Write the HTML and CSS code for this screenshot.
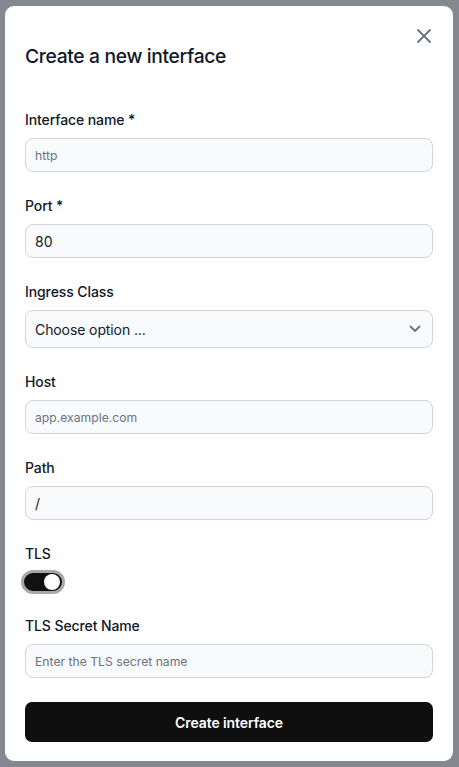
FILE: index.html
```html
<!DOCTYPE html>
<html>
<head>
<meta charset="utf-8">
<link rel="stylesheet" href="styles.css">
</head>
<body>
<div class="overlay">
  <div class="modal">
    <button class="close" aria-label="Close">
      <svg width="14" height="14" viewBox="0 0 14 14"><path d="M1 1L13 13M13 1L1 13" stroke="#6b7280" stroke-width="1.8" stroke-linecap="round"/></svg>
    </button>
    <h2 class="title">Create a new interface</h2>
    <form class="form">
      <div class="field">
        <label class="label">Interface name *</label>
        <input class="input" placeholder="http">
      </div>
      <div class="field">
        <label class="label">Port *</label>
        <input class="input value" value="80">
      </div>
      <div class="field">
        <label class="label">Ingress Class</label>
        <div class="select">
          <span>Choose option ...</span>
          <svg width="12" height="8" viewBox="0 0 12 8"><path d="M1.5 1.5L6 6L10.5 1.5" fill="none" stroke="#6b7280" stroke-width="1.8" stroke-linecap="round" stroke-linejoin="round"/></svg>
        </div>
      </div>
      <div class="field">
        <label class="label">Host</label>
        <input class="input" placeholder="app.example.com">
      </div>
      <div class="field">
        <label class="label">Path</label>
        <input class="input value" value="/">
      </div>
      <div class="field field-toggle">
        <label class="label">TLS</label>
        <div class="toggle-wrap"><span class="toggle"><span class="knob"></span></span></div>
      </div>
      <div class="field">
        <label class="label">TLS Secret Name</label>
        <input class="input" placeholder="Enter the TLS secret name">
      </div>
      <button type="button" class="submit">Create interface</button>
    </form>
  </div>
</div>
</body>
</html>
```
FILE: styles.css
```css
* { box-sizing: border-box; }
html, body { margin: 0; padding: 0; }
body {
  background: #868890;
  font-family: Inter, "Noto Sans", sans-serif;
  color: #111827;
  width: 459px;
  height: 767px;
  overflow: hidden;
}
.overlay {
  padding: 6px 6px 0 5px;
}
.modal {
  position: relative;
  background: #fff;
  border-radius: 9px;
  width: 448px;
  height: 755px;
  padding: 36px 20px 20px 20px;
}
.close {
  position: absolute;
  top: 23px;
  right: 22px;
  width: 14px;
  height: 14px;
  padding: 0;
  border: 0;
  background: none;
  display: block;
}
.close svg { display: block; }
.title {
  margin: 0;
  font-size: 19.3px;
  line-height: 28px;
  font-weight: 500;
  color: #111827;
  letter-spacing: -0.35px;
}
.form {
  margin-top: 40px;
  display: flex;
  flex-direction: column;
  gap: 24px;
}
.field {
  display: flex;
  flex-direction: column;
  gap: 8px;
}
.field-toggle { gap: 6px; margin-bottom: -2px; }
.label {
  font-size: 14px;
  line-height: 20px;
  font-weight: 500;
  color: #111827;
  letter-spacing: -0.1px;
}
.input {
  height: 34px;
  width: 100%;
  border: 1px solid #d1d5db;
  border-radius: 8px;
  background: #f9fafb;
  padding: 0 9px;
  font-family: inherit;
  font-size: 12.2px;
  color: #111827;
  outline: none;
}
.input::placeholder { color: #6b7280; }
.input.value { font-size: 14px; }
.select {
  height: 38px;
  border: 1px solid #d1d5db;
  border-radius: 8px;
  background: #f9fafb;
  padding: 0 11px 0 9px;
  display: flex;
  align-items: center;
  justify-content: space-between;
  font-size: 14px;
  letter-spacing: -0.1px;
  color: #111827;
}
.select svg { display: block; }
.toggle-wrap {
  margin-left: -4px;
  height: 24px;
  display: flex;
}
.toggle {
  width: 44px;
  height: 24px;
  border-radius: 12px;
  background: #111;
  border: 3px solid #a8a8a8;
  display: flex;
  align-items: center;
  justify-content: flex-end;
  padding: 0 2px;
}
.knob {
  width: 16px;
  height: 16px;
  border-radius: 50%;
  background: #fff;
}
.submit {
  height: 40px;
  border: 0;
  border-radius: 7px;
  background: #0f0f0f;
  color: #fff;
  font-family: inherit;
  font-size: 14px;
  font-weight: 600;
  letter-spacing: -0.1px;
}
```
